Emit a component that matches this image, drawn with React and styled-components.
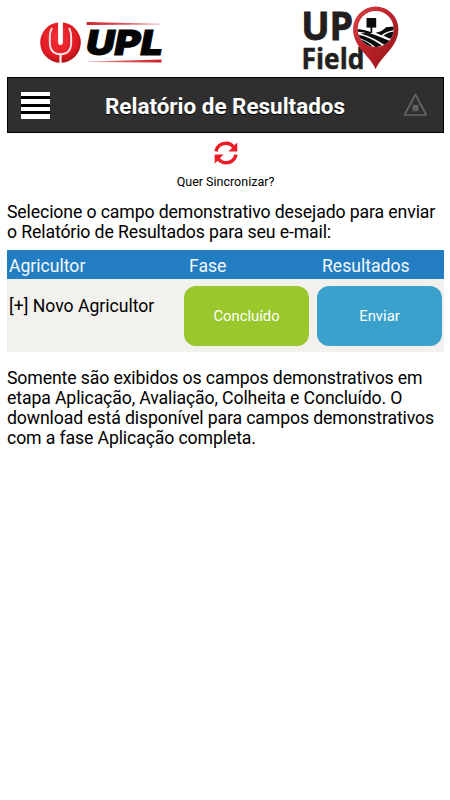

// ----- IMPORTS

import React from 'react';
import styled, { createGlobalStyle } from 'styled-components';

// ----- STYLED COMPONENTS

const GlobalStyle = createGlobalStyle`
	body {
		margin: 0;
		background: #fff;
		color: #000;
		font-family: Roboto, "Liberation Sans", sans-serif;
		font-size: 17.6px;
		line-height: 20px;
	}
`;
const Screen = styled.div`
	box-sizing: border-box;
	width: 450px;
	min-height: 800px;
	padding: 0 6px 0 7px;
`;
const LogoBar = styled.header`
	display: flex;
	justify-content: space-between;
	height: 77px;
	padding: 0 44px 0 29px;

	svg {
		overflow: visible;
	}
`;
const TitleBar = styled.div`
	box-sizing: border-box;
	display: flex;
	align-items: center;
	justify-content: space-between;
	height: 56px;
	padding: 0 15px 0 13px;
	border: 1px solid #000;
	background: #2f2f2f;
`;
const Title = styled.h1`
	margin: 0;
	padding: 1px 3px 0 0;
	color: #fff;
	font-size: 22.45px;
	line-height: 28px;
	font-weight: 700;
	white-space: nowrap;
	text-shadow: 0 1px 0 #000;
`;
const MenuButton = styled.button`
	display: flex;
	flex-direction: column;
	gap: 3px;
	width: 29px;
	padding: 0;
	border: 0;
	background: #000;
`;
const MenuBar = styled.span`
	height: 4.5px;
	background: #fff;
`;
const Sync = styled.div`
	display: flex;
	flex-direction: column;
	align-items: center;
	height: 69px;
	padding-top: 7px;
	box-sizing: border-box;
`;
const SyncLabel = styled.span`
	margin-top: 8px;
	font-size: 12.5px;
	line-height: 16px;
`;
const Paragraph = styled.p`
	margin: 0;
	height: ${({ $height }) => $height};
	font-size: 17.7px;
	letter-spacing: -0.13px;
	white-space: nowrap;
`;
const Table = styled.section`
	margin-bottom: 16px;
`;
const Row = styled.div`
	display: grid;
	grid-template-columns: 177px 133px 127px;
`;
const HeadRow = styled(Row)`
	height: 29px;
	align-items: center;
	background: #237dc2;
	color: #f4f8fb;
`;
const BodyRow = styled(Row)`
	height: 73px;
	background: #f2f1ed;
`;
const HeadCell = styled.span`
	padding: 3px 0 0 ${({ $indent }) => $indent};
`;
const FarmerCell = styled.span`
	padding: 17px 0 0 2px;
`;
const ActionButton = styled.button`
	width: 125px;
	height: 60px;
	margin-top: 7px;
	padding: 0;
	border: 0;
	border-radius: 12px;
	background: ${({ $color }) => $color};
	color: #fff;
	font-family: inherit;
	font-size: 14.8px;
`;

// ----- LOGOS AND ICONS

const UplLogo = () => (
	<svg width="130" height="77" viewBox="36 0 130 77" role="img" aria-label="UPL">
		<defs>
			<radialGradient id="uplRed" cx="0.45" cy="0.4" r="0.6">
				<stop offset="0" stopColor="#f4303a" />
				<stop offset="0.75" stopColor="#e01b22" />
				<stop offset="1" stopColor="#b01318" />
			</radialGradient>
			<linearGradient id="uplTop">
				<stop offset="0" stopColor="#cf2028" />
				<stop offset="0.5" stopColor="#dd5257" />
				<stop offset="1" stopColor="#e8a0a0" />
			</linearGradient>
			<linearGradient id="uplBottom">
				<stop offset="0" stopColor="#f0b0b0" />
				<stop offset="0.5" stopColor="#dd5257" />
				<stop offset="1" stopColor="#cf2028" />
			</linearGradient>
		</defs>
		<circle cx="60.5" cy="42.5" r="20.3" fill="url(#uplRed)" />
		<path d="M52.2 28.2C49.4 31 49.8 36 49.8 42C49.8 50.5 53.5 54.2 60.5 54.2S71.2 50.5 71.2 42C71.2 36 71.6 31 68.8 28.2" fill="none" stroke="#fbe6e6" strokeWidth="1.9" />
		<path d="M60.5 54V63.5" stroke="#fff" strokeWidth="2" />
		<path d="M58.1 21.5V42Q58.1 45 60.5 45T62.9 42V21.5Z" fill="#fff" />
		<path d="M86.7 22L160 23.8V24.6L86.7 25Z" fill="url(#uplTop)" />
		<path d="M88 61.5L161.5 59.5V62.6L88 62Z" fill="url(#uplBottom)" />
		<text x="86" y="55.3" textLength="77" lengthAdjust="spacingAndGlyphs" fill="#050505" stroke="#050505" strokeWidth="0.9" fontFamily="Inter, Liberation Sans, sans-serif" fontSize="34.5" fontWeight="900" fontStyle="italic">UPL</text>
	</svg>
);
const UpFieldLogo = () => (
	<svg width="100" height="77" viewBox="300 0 100 77" role="img" aria-label="UP Field">
		<defs>
			<linearGradient id="pinRed" x1="0" y1="0" x2="1" y2="1">
				<stop offset="0" stopColor="#d94448" />
				<stop offset="0.45" stopColor="#bd2329" />
				<stop offset="1" stopColor="#8f1519" />
			</linearGradient>
			<clipPath id="pinHole"><circle cx="375.7" cy="29" r="18" /></clipPath>
		</defs>
		<text x="301.2" y="40" textLength="52" lengthAdjust="spacingAndGlyphs" fill="#231f20" stroke="#231f20" strokeWidth="0.8" fontFamily="Open Sans, sans-serif" fontSize="39" fontWeight="700">UP</text>
		<text x="301.5" y="68.8" textLength="63" lengthAdjust="spacingAndGlyphs" fill="#231f20" stroke="#231f20" strokeWidth="0.5" fontFamily="Open Sans, sans-serif" fontSize="29" fontWeight="700">Field</text>
		<path d="M375.7 69.3C371 57 353 47 353 29.3A22.7 22.7 0 0 1 398.4 29.3C398.4 47 380.4 57 375.7 69.3Z" fill="url(#pinRed)" />
		<circle cx="375.7" cy="29" r="18" fill="#fff" />
		<g clipPath="url(#pinHole)" fill="#0c0c0c">
			<rect x="366.5" y="18" width="9.7" height="9.6" />
			<rect x="370.5" y="27" width="1.8" height="5.5" />
			<path d="M358 29Q365 29.5 372.5 32.5L369.5 34.3Q363 31.5 357 31.8Z" />
			<path d="M360.5 33.5Q367 32 374 34.5L390 41L386 46Q374 37.5 360.5 33.5Z" />
			<path d="M358 34.8Q369 36.5 382 45.5L376 47.5Q367 40 358 38Z" />
			<path d="M375.5 32.8Q382 31.8 386 27.3L394 26.5V30Q386 31.5 381.5 35.2Z" />
			<path d="M383.5 35.7Q388 32 394 31.5V37L390 38.8Z" />
			<path d="M360 39.5Q367 41 373 47H366Z" />
		</g>
	</svg>
);
const WarningIcon = () => (
	<svg width="25" height="24" viewBox="0 0 25 24" fill="none">
		<path d="M12.4 1.5L23.3 22H1.5Z" stroke="#666" strokeWidth="1.6" strokeLinejoin="round" />
		<path d="M9 11.5L11 13.5M16 11.5L14 13.5M8.5 15H16.5M9 18.5L11 16.5M16 18.5L14 16.5" stroke="#606060" strokeWidth="1" />
		<ellipse cx="12.5" cy="15" rx="2.7" ry="3.3" fill="#666" />
		<path d="M12.5 15V17.5" stroke="#444" strokeWidth="0.8" />
	</svg>
);
const SyncIcon = () => (
	<svg width="26" height="26" viewBox="0 0 26 26" fill="none">
		<path d="M3 11.3C4 6.2 8 3.2 13 3.2C16 3.2 18.6 4.5 20.5 7" stroke="#ed1c24" strokeWidth="3.5" />
		<path d="M24.3 2.6V11.4H15.4L18.5 8.4L21.3 5.3Z" fill="#ed1c24" />
		<path d="M23 14.7C22 19.8 18 22.8 13 22.8C10 22.8 7.4 21.5 5.5 19" stroke="#ed1c24" strokeWidth="3.5" />
		<path d="M1.7 23.4V14.6H10.6L7.5 17.6L4.7 20.7Z" fill="#ed1c24" />
	</svg>
);

// ----- PAGE

export default () => (
	<Screen>
		<GlobalStyle />
		<LogoBar>
			<UplLogo />
			<UpFieldLogo />
		</LogoBar>
		<TitleBar>
			<MenuButton aria-label="Menu">
				<MenuBar />
				<MenuBar />
				<MenuBar />
				<MenuBar />
			</MenuButton>
			<Title>Relatório de Resultados</Title>
			<WarningIcon />
		</TitleBar>
		<Sync>
			<SyncIcon />
			<SyncLabel>Quer Sincronizar?</SyncLabel>
		</Sync>
		<Paragraph $height="48px">
			Selecione o campo demonstrativo desejado para enviar<br />
			o Relatório de Resultados para seu e-mail:
		</Paragraph>
		<Table>
			<HeadRow>
				<HeadCell $indent="2px">Agricultor</HeadCell>
				<HeadCell $indent="5px">Fase</HeadCell>
				<HeadCell $indent="5px">Resultados</HeadCell>
			</HeadRow>
			<BodyRow>
				<FarmerCell>[+] Novo Agricultor</FarmerCell>
				<ActionButton $color="#99c72c">Concluído</ActionButton>
				<ActionButton $color="#3aa1cc">Enviar</ActionButton>
			</BodyRow>
		</Table>
		<Paragraph $height="80px">
			Somente são exibidos os campos demonstrativos em<br />
			etapa Aplicação, Avaliação, Colheita e Concluído. O<br />
			download está disponível para campos demonstrativos<br />
			com a fase Aplicação completa.
		</Paragraph>
	</Screen>
);
